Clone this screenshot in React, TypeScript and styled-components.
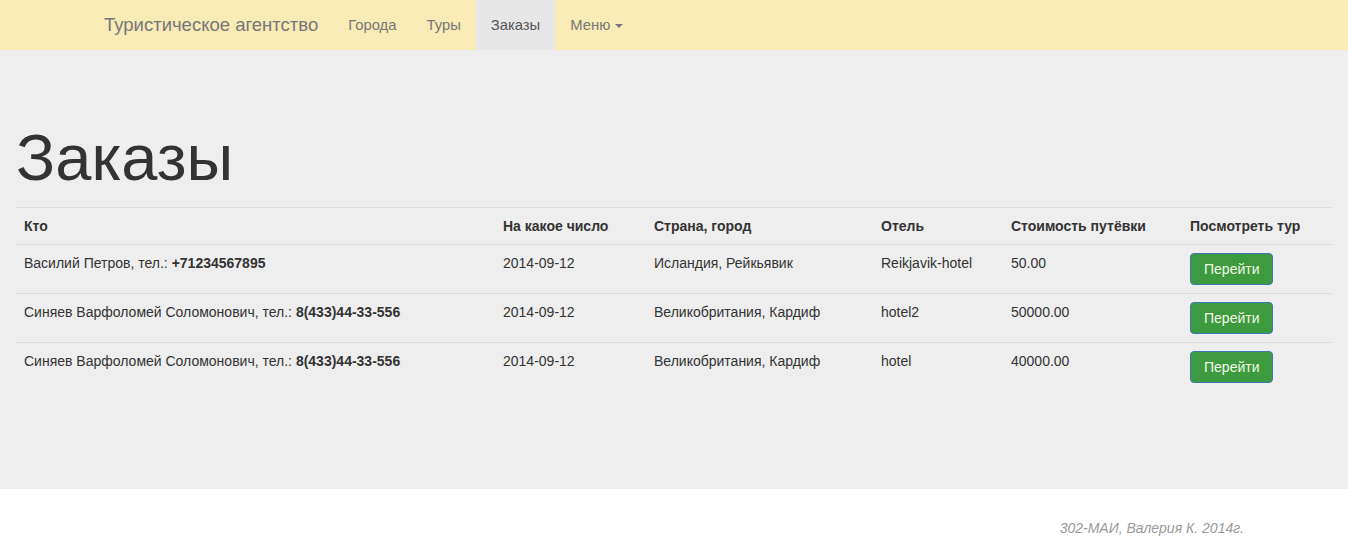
import styled, { createGlobalStyle } from 'styled-components';

const GlobalStyle = createGlobalStyle`
  * {
    box-sizing: border-box;
  }

  body {
    margin: 0;
    background: #fff;
    font-family: "Liberation Sans", Arial, sans-serif;
    font-size: 14px;
    line-height: 1.42857;
    color: #333;
  }
`;

const Navbar = styled.nav`
  height: 50px;
  background: #f8ebb6;
`;

const NavContainer = styled.div`
  width: 1170px;
  margin: 0 auto;
  padding: 0 15px;
  display: flex;
  align-items: stretch;
  height: 100%;
`;

const Brand = styled.a`
  font-size: 18.5px;
  line-height: 20px;
  padding: 15px;
  margin-left: -15px;
  color: #777;
  text-decoration: none;
`;

const NavList = styled.ul`
  display: flex;
  list-style: none;
  margin: 0;
  padding: 0;
`;

const NavItem = styled.li<{ $active?: boolean }>`
  a {
    display: block;
    height: 50px;
    padding: 15px;
    font-size: 14.8px;
    line-height: 20px;
    color: ${(p) => (p.$active ? '#555' : '#777')};
    background: ${(p) => (p.$active ? '#e7e7e7' : 'transparent')};
    text-decoration: none;
  }
`;

const Caret = styled.span`
  display: inline-block;
  width: 0;
  height: 0;
  margin-left: 5px;
  vertical-align: middle;
  border-top: 4px solid #777;
  border-right: 4px solid transparent;
  border-left: 4px solid transparent;
`;

const Jumbotron = styled.section`
  background: #eee;
  padding: 52px 16px 99px;
`;

const Title = styled.h1`
  font-size: 65px;
  font-weight: 400;
  line-height: 1.1;
  margin: 20px 0 13px;
  color: #333;
`;

const Table = styled.table`
  width: 100%;
  border-collapse: collapse;
  table-layout: fixed;

  th,
  td {
    text-align: left;
    vertical-align: top;
    padding: 8px;
    line-height: 20px;
    border-top: 1px solid #ddd;
  }

  th {
    font-weight: 700;
  }

  tbody tr:last-child td {
    padding-bottom: 7px;
  }
`;

const GoButton = styled.button`
  display: block;
  height: 32px;
  padding: 0 13px;
  font-family: inherit;
  font-size: 14px;
  color: #f4f8e8;
  background: #3e9a3e;
  border: 1px solid #3a79b8;
  border-radius: 4px;
`;

const Footer = styled.footer`
  width: 1170px;
  margin: 0 auto;
  padding: 30px 15px 20px;
  text-align: right;
  font-style: italic;
  color: #999;
`;

const orders = [
  {
    who: 'Василий Петров, тел.: ',
    phone: '+71234567895',
    date: '2014-09-12',
    place: 'Исландия, Рейкьявик',
    hotel: 'Reikjavik-hotel',
    price: '50.00',
  },
  {
    who: 'Синяев Варфоломей Соломонович, тел.: ',
    phone: '8(433)44-33-556',
    date: '2014-09-12',
    place: 'Великобритания, Кардиф',
    hotel: 'hotel2',
    price: '50000.00',
  },
  {
    who: 'Синяев Варфоломей Соломонович, тел.: ',
    phone: '8(433)44-33-556',
    date: '2014-09-12',
    place: 'Великобритания, Кардиф',
    hotel: 'hotel',
    price: '40000.00',
  },
];

const App = () => {
  return (
    <>
      <GlobalStyle />
      <Navbar>
        <NavContainer>
          <Brand href="#">Туристическое агентство</Brand>
          <NavList>
            <NavItem>
              <a href="#">Города</a>
            </NavItem>
            <NavItem>
              <a href="#">Туры</a>
            </NavItem>
            <NavItem $active>
              <a href="#">Заказы</a>
            </NavItem>
            <NavItem>
              <a href="#">
                Меню<Caret />
              </a>
            </NavItem>
          </NavList>
        </NavContainer>
      </Navbar>
      <Jumbotron>
        <Title>Заказы</Title>
        <Table>
          <colgroup>
            <col style={{ width: 479 }} />
            <col style={{ width: 151 }} />
            <col style={{ width: 227 }} />
            <col style={{ width: 130 }} />
            <col style={{ width: 179 }} />
            <col style={{ width: 150 }} />
          </colgroup>
          <thead>
            <tr>
              <th>Кто</th>
              <th>На какое число</th>
              <th>Страна, город</th>
              <th>Отель</th>
              <th>Стоимость путёвки</th>
              <th>Посмотреть тур</th>
            </tr>
          </thead>
          <tbody>
            {orders.map((o, i) => (
              <tr key={i}>
                <td>
                  {o.who}
                  <b>{o.phone}</b>
                </td>
                <td>{o.date}</td>
                <td>{o.place}</td>
                <td>{o.hotel}</td>
                <td>{o.price}</td>
                <td>
                  <GoButton>Перейти</GoButton>
                </td>
              </tr>
            ))}
          </tbody>
        </Table>
      </Jumbotron>
      <Footer>302-МАИ, Валерия К. 2014г.</Footer>
    </>
  );
};

export default App;
